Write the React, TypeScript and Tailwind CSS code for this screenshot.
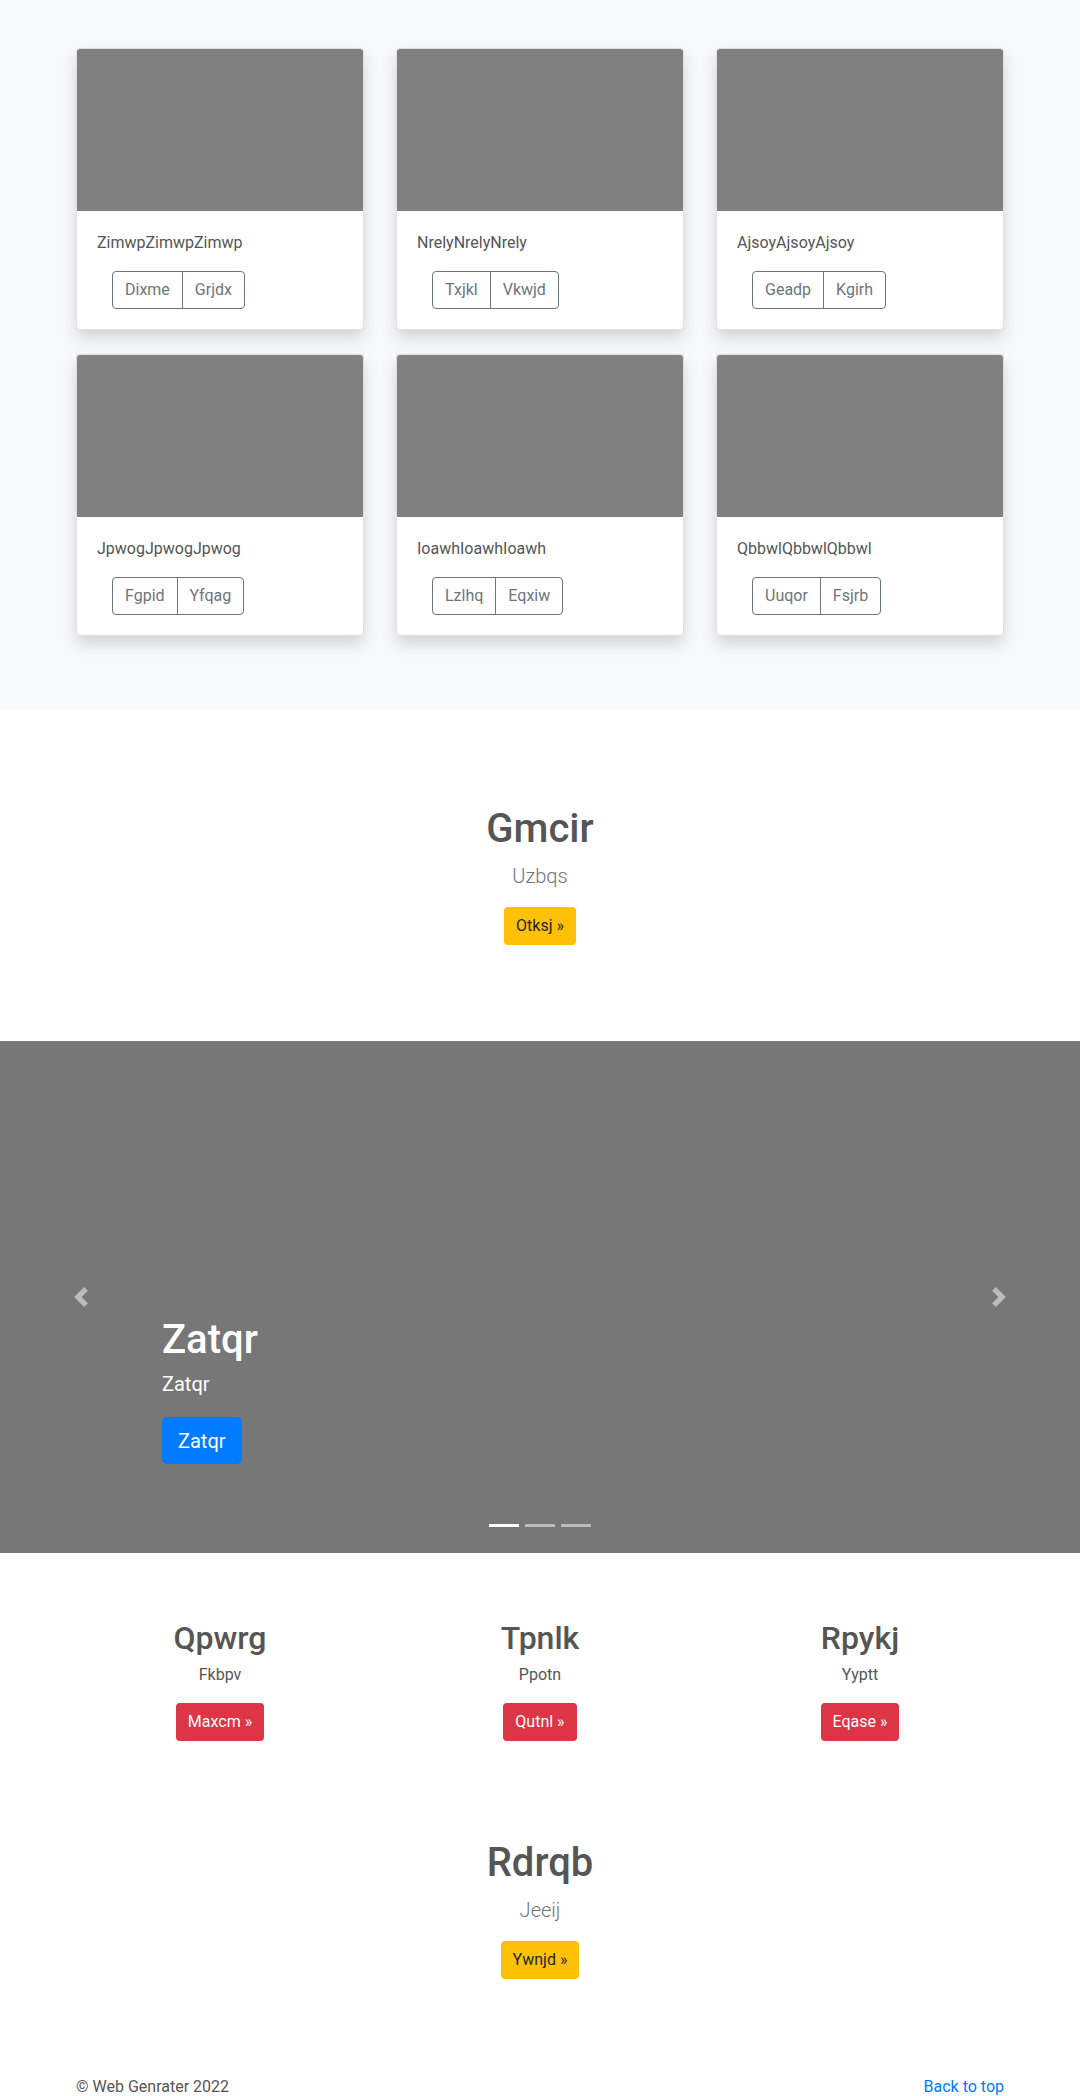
import React from "react";

const cards = [
  { t: "ZimwpZimwpZimwp", a: "Dixme", b: "Grjdx" },
  { t: "NrelyNrelyNrely", a: "Txjkl", b: "Vkwjd" },
  { t: "AjsoyAjsoyAjsoy", a: "Geadp", b: "Kgirh" },
  { t: "JpwogJpwogJpwog", a: "Fgpid", b: "Yfqag" },
  { t: "IoawhIoawhIoawh", a: "Lzlhq", b: "Eqxiw" },
  { t: "QbbwlQbbwlQbbwl", a: "Uuqor", b: "Fsjrb" },
];

const cols = [
  { h: "Qpwrg", p: "Fkbpv", b: "Maxcm »" },
  { h: "Tpnlk", p: "Ppotn", b: "Qutnl »" },
  { h: "Rpykj", p: "Yyptt", b: "Eqase »" },
];

function Chevron({ dir }: { dir: "left" | "right" }) {
  return (
    <svg width="20" height="20" viewBox="0 0 8 8" className="opacity-50">
      {dir === "left" ? (
        <path fill="#fff" d="M5.25 0l-4 4 4 4 1.5-1.5-2.5-2.5 2.5-2.5-1.5-1.5z" />
      ) : (
        <path fill="#fff" d="M2.75 0l-1.5 1.5 2.5 2.5-2.5 2.5 1.5 1.5 4-4-4-4z" />
      )}
    </svg>
  );
}

export default function App() {
  return (
    <div
      className="text-[#555] text-base leading-6"
      style={{ fontFamily: '"Segoe UI", Roboto, "Liberation Sans", sans-serif' }}
    >
      {/* Album */}
      <section className="bg-[#f8f9fa] pt-12 pb-[73px]">
        <div className="mx-auto w-[928px] grid grid-cols-3 gap-x-8 gap-y-6">
          {cards.map((c) => (
            <div
              key={c.t}
              className="bg-white rounded border border-black/[0.125] shadow-[0_8px_16px_rgba(0,0,0,0.15)] overflow-hidden"
            >
              <div className="h-[162px] bg-[#808080]" />
              <div className="p-5">
                <p className="mb-4">{c.t}</p>
                <div className="ml-[15px] inline-flex rounded border border-[#6c757d] text-[#6c757d]">
                  <button className="px-3 py-[6px] leading-6">{c.a}</button>
                  <button className="px-3 py-[6px] leading-6 border-l border-[#6c757d]">{c.b}</button>
                </div>
              </div>
            </div>
          ))}
        </div>
      </section>

      {/* Jumbotron */}
      <section className="py-24 text-center">
        <h1 className="text-[40px] leading-[48px] font-medium mb-2">Gmcir</h1>
        <p className="text-[20px] leading-[30px] font-light text-[#6c757d] mb-4">Uzbqs</p>
        <button className="bg-[#ffc107] text-[#212529] rounded px-3 py-[7px] leading-6">Otksj »</button>
      </section>

      {/* Carousel */}
      <section className="relative h-[512px] bg-[#777]">
        <div className="absolute left-0 top-0 h-full w-[162px] flex items-center justify-center">
          <Chevron dir="left" />
        </div>
        <div className="absolute right-0 top-0 h-full w-[162px] flex items-center justify-center">
          <Chevron dir="right" />
        </div>
        <div className="absolute left-[162px] bottom-[89px] text-white">
          <h1 className="text-[40px] leading-[48px] font-medium mb-[5px]">Zatqr</h1>
          <p className="text-[20px] leading-[30px] mb-[18px]">Zatqr</p>
          <button className="bg-[#007bff] text-white rounded-[5px] px-4 py-2 text-[20px] leading-[30px] h-[47px]">
            Zatqr
          </button>
        </div>
        <div className="absolute bottom-[26px] left-0 right-0 flex justify-center">
          <span className="w-[30px] h-[3px] mx-[3px] bg-white" />
          <span className="w-[30px] h-[3px] mx-[3px] bg-white/50" />
          <span className="w-[30px] h-[3px] mx-[3px] bg-white/50" />
        </div>
      </section>

      {/* Columns */}
      <section className="pt-[66px]">
        <div className="mx-auto w-[960px] grid grid-cols-3">
          {cols.map((c) => (
            <div key={c.h} className="text-center px-4">
              <h2 className="text-[32px] leading-[38px] font-medium mb-[6px]">{c.h}</h2>
              <p className="mb-4">{c.p}</p>
              <button className="bg-[#dc3545] text-white rounded px-3 py-[7px] leading-6">{c.b}</button>
            </div>
          ))}
        </div>
      </section>

      {/* Second jumbotron */}
      <section className="pt-[98px] pb-24 text-center">
        <h1 className="text-[40px] leading-[48px] font-medium mb-2">Rdrqb</h1>
        <p className="text-[20px] leading-[30px] font-light text-[#6c757d] mb-4">Jeeij</p>
        <button className="bg-[#ffc107] text-[#212529] rounded px-3 py-[7px] leading-6">Ywnjd »</button>
      </section>

      {/* Footer */}
      <footer className="mx-auto w-[928px] flex justify-between pb-12">
        <p>© Web Genrater 2022</p>
        <a href="#" className="text-[#007bff]">Back to top</a>
      </footer>
    </div>
  );
}
